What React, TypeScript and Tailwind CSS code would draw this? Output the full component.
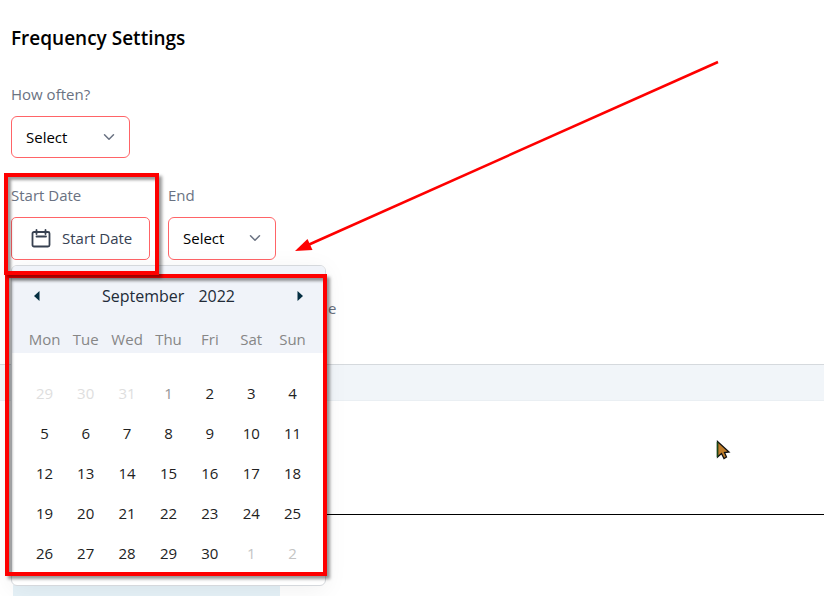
import React from 'react';
import { ChevronDown } from 'lucide-react';

const weekDays = ['Mon', 'Tue', 'Wed', 'Thu', 'Fri', 'Sat', 'Sun'];

const weeks = [
  [29, 30, 31, 1, 2, 3, 4],
  [5, 6, 7, 8, 9, 10, 11],
  [12, 13, 14, 15, 16, 17, 18],
  [19, 20, 21, 22, 23, 24, 25],
  [26, 27, 28, 29, 30, 1, 2],
];

const dayColor = (week: number, day: number) => {
  if (week === 0 && day > 20) return 'text-[#dedede]';
  if (week === 0 && day === 1) return 'text-[#949494]';
  if (week === 4 && day < 10) return 'text-[#c4c4c4]';
  return 'text-[#222222]';
};

const SelectField = ({ id, label, size }: { id: string; label: string; size: string }) => (
  <div>
    <label htmlFor={id} className="block leading-6 mb-2.5 text-gray-500">{label}</label>
    <div className={`relative ${size}`}>
      <select
        id={id}
        className="appearance-none w-full h-full pl-3.5 pr-8 rounded-md border border-red-400 bg-white text-black"
      >
        <option>Select</option>
      </select>
      <ChevronDown className="absolute right-3 top-3 h-[18px] w-[18px] text-gray-500 pointer-events-none" />
    </div>
  </div>
);

const Calendar = () => (
  <div className="absolute left-0 top-full mt-[5px] w-[315px] rounded-md border border-[#d5d8dc] bg-white overflow-hidden shadow-[0_4px_24px_rgba(0,0,0,0.06)]">
    <div className="flex items-center justify-between h-[60px] px-5 bg-[#f0f3f9]">
      <button type="button" aria-label="Previous month">
        <svg className="h-3 w-3" viewBox="0 0 12 12" fill="#052f42">
          <path d="M7.5 1v10L2 6z" />
        </svg>
      </button>
      <div className="flex gap-3.5 text-base text-[#222b38]">
        <span>September</span>
        <span>2022</span>
      </div>
      <button type="button" aria-label="Next month">
        <svg className="h-3 w-3" viewBox="0 0 12 12" fill="#052f42">
          <path d="M4.500 1v10L10 6z" />
        </svg>
      </button>
    </div>
    <table className="table-fixed w-full mb-3 text-center">
      <thead className="bg-[#f0f3f9] text-[#868686]">
        <tr>
          {weekDays.map((day) => (
            <th key={day} className="p-0 h-[27px] font-normal leading-[27px] first:w-[53px] first:pl-3 last:w-[53px] last:pr-3">
              {day}
            </th>
          ))}
        </tr>
      </thead>
      <tbody>
        <tr className="h-5"><td colSpan={7} className="p-0"></td></tr>
        {weeks.map((week, i) => (
          <tr key={i} className="h-10">
            {week.map((day) => (
              <td key={day} className="p-0 first:pl-3 last:pr-3">
                <button type="button" className={`w-full ${dayColor(i, day)}`}>{day}</button>
              </td>
            ))}
          </tr>
        ))}
      </tbody>
    </table>
  </div>
);

const App = () => {
  return (
    <div className="relative min-h-screen overflow-hidden bg-white text-[15px] font-['Open_Sans',sans-serif]">
      {/* Frequency form */}
      <section className="px-[11px] pt-6 pb-11 border-b border-[#d5d9dd]">
        <h1 className="text-[19px] leading-7 font-semibold text-black">Frequency Settings</h1>
        <div className="mt-[30px]">
          <SelectField id="how-often" label="How often?" size="w-[119px] h-[42px]" />
        </div>
        <div className="flex gap-[18px] mt-[25px]">
          <div className="relative z-10">
            <label htmlFor="start-date" className="block leading-6 mb-2.5 text-gray-500">Start Date</label>
            <button
              id="start-date"
              type="button"
              className="flex items-center gap-2.5 w-[139px] h-[43px] pl-[18px] rounded-[5px] border border-red-400 bg-white text-gray-700"
            >
              <svg className="h-[22px] w-[22px]" viewBox="0 0 22 22" fill="none" stroke="#374151" strokeWidth="1.8" strokeLinecap="round" strokeLinejoin="round">
                <rect x="2.500" y="4" width="17" height="14.500" rx="1.500" />
                <path d="M6.500 2v4M15.500 2v4M6.500 8.500h9.500" />
              </svg>
              <span>Start Date</span>
            </button>
            <Calendar />
          </div>
          <SelectField id="end" label="End" size="w-[108px] h-[43px]" />
        </div>
        <p className="mt-9 pl-[317px] leading-6 text-gray-500">e</p>
      </section>

      <div className="h-9 bg-[#f1f5f9] border-b border-[#eaeff3]"></div>
      <hr className="mt-[113px] ml-[13px] border-black" />
      <div className="mt-[70px] ml-[13px] w-[267px] h-6 bg-[#e5f1f7]"></div>

      {/* Callouts */}
      <div className="absolute z-20 left-[5px] top-[274px] w-[322px] h-[302px] border-4 border-[#fe0000] pointer-events-none shadow-[3px_3px_3px_rgba(0,0,0,0.4),inset_3px_3px_3px_rgba(0,0,0,0.4)]"></div>
      <div className="absolute z-20 left-1 top-[173px] w-[155px] h-[102px] border-4 border-[#fe0000] pointer-events-none shadow-[3px_3px_3px_rgba(0,0,0,0.4),inset_3px_3px_3px_rgba(0,0,0,0.4)]"></div>
      <svg className="absolute z-20 left-[290px] top-[55px] w-[435px] h-[205px] pointer-events-none" viewBox="290 55 435 205">
        <path d="M308 245L718 62" stroke="#fe0000" strokeWidth="2.5" />
        <path d="M295 251L307.500 239L312.500 250z" fill="#fe0000" />
      </svg>
      <svg className="absolute z-20 left-[716px] top-[440px] w-4 h-5 pointer-events-none" viewBox="0 0 16 20">
        <path d="M1.500 1.500V17L5.500 13.500L8 18.500L10.500 17L8.500 12.500L13 12z" fill="#bf7d2b" stroke="#111" strokeWidth="1.300" />
        <path d="M1.500 2V17" stroke="#174717" strokeWidth="1.500" />
      </svg>
    </div>
  );
};

export default App;
